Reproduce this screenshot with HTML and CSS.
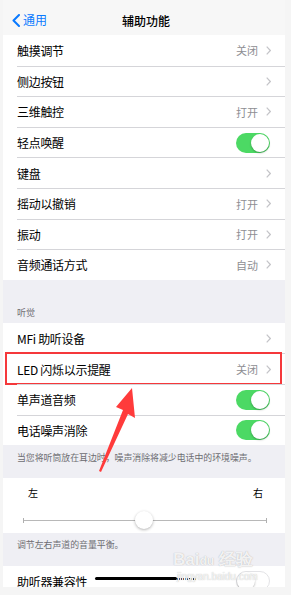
FILE: index.html
```html
<!DOCTYPE html>
<html lang="zh">
<head>
<meta charset="utf-8">
<link rel="stylesheet" href="styles.css">
</head>
<body>
<div class="screen">
  <div class="nav">
    <div class="back">
      <svg width="8" height="13" viewBox="0 0 8 13"><polyline points="7,1 1.5,6.5 7,12" fill="none" stroke="#0a7aff" stroke-width="2" stroke-linecap="round" stroke-linejoin="round"/></svg>
      <span>通用</span>
    </div>
    <div class="title">辅助功能</div>
  </div>

  <div class="group">
    <div class="row"><div class="inner"><span class="label">触摸调节</span><span class="value">关闭</span><svg class="chev" width="5" height="9" viewBox="0 0 5 9"><polyline points="0.7,0.7 4.3,4.5 0.7,8.3" fill="none" stroke="#c4c4c8" stroke-width="1.2"/></svg></div></div>
    <div class="row"><div class="inner"><span class="label">侧边按钮</span><span class="value"></span><svg class="chev" width="5" height="9" viewBox="0 0 5 9"><polyline points="0.7,0.7 4.3,4.5 0.7,8.3" fill="none" stroke="#c4c4c8" stroke-width="1.2"/></svg></div></div>
    <div class="row"><div class="inner"><span class="label">三维触控</span><span class="value">打开</span><svg class="chev" width="5" height="9" viewBox="0 0 5 9"><polyline points="0.7,0.7 4.3,4.5 0.7,8.3" fill="none" stroke="#c4c4c8" stroke-width="1.2"/></svg></div></div>
    <div class="row"><div class="inner"><span class="label">轻点唤醒</span><span class="toggle on"><span class="knob"></span></span></div></div>
    <div class="row"><div class="inner"><span class="label">键盘</span><span class="value"></span><svg class="chev" width="5" height="9" viewBox="0 0 5 9"><polyline points="0.7,0.7 4.3,4.5 0.7,8.3" fill="none" stroke="#c4c4c8" stroke-width="1.2"/></svg></div></div>
    <div class="row"><div class="inner"><span class="label">摇动以撤销</span><span class="value">打开</span><svg class="chev" width="5" height="9" viewBox="0 0 5 9"><polyline points="0.7,0.7 4.3,4.5 0.7,8.3" fill="none" stroke="#c4c4c8" stroke-width="1.2"/></svg></div></div>
    <div class="row"><div class="inner"><span class="label">振动</span><span class="value">打开</span><svg class="chev" width="5" height="9" viewBox="0 0 5 9"><polyline points="0.7,0.7 4.3,4.5 0.7,8.3" fill="none" stroke="#c4c4c8" stroke-width="1.2"/></svg></div></div>
    <div class="row"><div class="inner"><span class="label">音频通话方式</span><span class="value">自动</span><svg class="chev" width="5" height="9" viewBox="0 0 5 9"><polyline points="0.7,0.7 4.3,4.5 0.7,8.3" fill="none" stroke="#c4c4c8" stroke-width="1.2"/></svg></div></div>
  </div>

  <div class="header">听觉</div>

  <div class="group">
    <div class="row"><div class="inner"><span class="label">MFi 助听设备</span><span class="value"></span><svg class="chev" width="5" height="9" viewBox="0 0 5 9"><polyline points="0.7,0.7 4.3,4.5 0.7,8.3" fill="none" stroke="#c4c4c8" stroke-width="1.2"/></svg></div></div>
    <div class="row highlight"><div class="inner"><span class="label">LED 闪烁以示提醒</span><span class="value">关闭</span><svg class="chev" width="5" height="9" viewBox="0 0 5 9"><polyline points="0.7,0.7 4.3,4.5 0.7,8.3" fill="none" stroke="#c4c4c8" stroke-width="1.2"/></svg></div></div>
    <div class="row"><div class="inner"><span class="label">单声道音频</span><span class="toggle on"><span class="knob"></span></span></div></div>
    <div class="row"><div class="inner"><span class="label">电话噪声消除</span><span class="toggle on"><span class="knob"></span></span></div></div>
  </div>

  <div class="footer first">当您将听筒放在耳边时，噪声消除将减少电话中的环境噪声。</div>

  <div class="slider-group">
    <div class="lr"><span>左</span><span>右</span></div>
    <div class="track">
      <span class="cap"></span>
      <span class="line"></span>
      <span class="cap"></span>
      <span class="thumb"></span>
    </div>
  </div>

  <div class="footer second">调节左右声道的音量平衡。</div>

  <div class="group">
    <div class="row"><div class="inner"><span class="label">助听器兼容性</span><span class="toggle off"><span class="knob"></span></span></div></div>
  </div>

  <svg class="arrow" width="60" height="90" viewBox="0 0 60 90">
    <polygon points="34,0 37,30 30,26 3,84 1,83 25,22 18,19" fill="#ff3b3b"/>
  </svg>

  <div class="bar"><span class="solid"></span><span class="dots"></span></div>

  <div class="watermark">
    <div class="wm-top">Bai<span class="paw">du</span> 经验</div>
    <div class="wm-bot">jingyan.baidu.com</div>
  </div>
</div>
</body>
</html>
```

FILE: styles.css
```css
* { box-sizing: border-box; }
html, body { margin: 0; padding: 0; }
body {
  background: #f5f5f5;
  width: 291px;
  height: 595px;
  overflow: hidden;
  font-family: "Noto Sans CJK SC", "Noto Sans", sans-serif;
  color: #000;
}
.screen {
  position: relative;
  width: 282px;
  height: 587px;
  margin-left: 3px;
  background: #efeff4;
  overflow: hidden;
}
.nav {
  height: 35px;
  background: #f7f7f7;
  display: flex;
  align-items: center;
  justify-content: center;
  position: relative;
}
.back {
  position: absolute;
  left: 9px;
  top: 13px;
  display: flex;
  align-items: center;
  gap: 3px;
  color: #0a7aff;
  font-size: 12px;
  line-height: 14px;
}
.title {
  font-size: 12px;
  font-weight: 500;
  margin-top: 5px;
  margin-left: 4px;
}
.group { background: #fff; }
.row {
  position: relative;
  padding-left: 14px;
  height: 30.6px;
}
.inner {
  height: 100%;
  display: flex;
  align-items: center;
  padding-right: 14px;
}
.row + .row .inner { border-top: 0.6px solid #d5d5d9; }
.label {
  flex: 1;
  font-size: 12px;
  letter-spacing: -0.3px;
}
.value {
  font-size: 11px;
  color: #8e8e93;
  margin-right: 8px;
}
.chev { display: block; }
.toggle {
  position: relative;
  width: 34px;
  height: 20px;
  border-radius: 10px;
  margin-right: 1px;
}
.toggle.on { background: #4cd964; }
.toggle.off { background: #fff; border: 1px solid #e3e3e6; }
.knob {
  position: absolute;
  top: 1px;
  width: 18px;
  height: 18px;
  border-radius: 50%;
  background: #fff;
  box-shadow: 0 1px 2px rgba(0,0,0,0.3);
}
.toggle.on .knob { right: 1px; }
.toggle.off .knob { left: 0; top: 0; }
.header {
  height: 43px;
  padding: 27px 0 0 14px;
  font-size: 9px;
  line-height: 11px;
  color: #6d6d72;
}
.footer {
  padding-left: 14px;
  font-size: 8.9px;
  line-height: 11px;
  color: #6d6d72;
  white-space: nowrap;
}
.footer.first { height: 33px; padding-top: 7px; }
.footer.second { height: 33px; padding-top: 6px; }
.slider-group {
  background: #fff;
  height: 55px;
  padding-top: 8px;
}
.lr {
  display: flex;
  justify-content: space-between;
  padding: 0 22px 0 25px;
  font-size: 10px;
  line-height: 14px;
}
.track {
  position: relative;
  display: flex;
  align-items: center;
  margin: 11px 18px 0 20px;
  height: 18px;
}
.cap {
  width: 1px;
  height: 5px;
  background: #b0b0b0;
}
.line {
  flex: 1;
  height: 1px;
  background: #b8b8b8;
}
.thumb {
  position: absolute;
  left: 112px;
  top: 0;
  width: 18px;
  height: 18px;
  border-radius: 50%;
  background: #fff;
  box-shadow: 0 1px 3px rgba(0,0,0,0.3);
}
.highlight::after {
  content: "";
  position: absolute;
  left: 2px;
  right: 3px;
  top: -1px;
  bottom: -1px;
  border: 2px solid #f5383b;
  pointer-events: none;
}
.arrow {
  position: absolute;
  left: 95px;
  top: 388px;
}
.bar {
  position: absolute;
  left: 92px;
  top: 577px;
  display: flex;
  align-items: center;
}
.bar .solid {
  width: 82px;
  height: 3px;
  background: #000;
  border-radius: 2px;
}
.bar .dots {
  width: 20px;
  height: 2px;
  background: repeating-linear-gradient(90deg, #333 0 1px, transparent 1px 2px);
}
.watermark {
  position: absolute;
  left: 170px;
  top: 550px;
  color: rgba(255,255,255,0.85);
  text-shadow: 0 0 1px rgba(120,120,120,0.6);
  font-family: "Liberation Sans", sans-serif;
}
.wm-top {
  font-size: 17px;
  line-height: 20px;
  font-weight: 700;
}
.wm-top .paw { font-size: 12px; }
.wm-bot {
  font-size: 10px;
  line-height: 12px;
  margin-left: 4px;
}
```
